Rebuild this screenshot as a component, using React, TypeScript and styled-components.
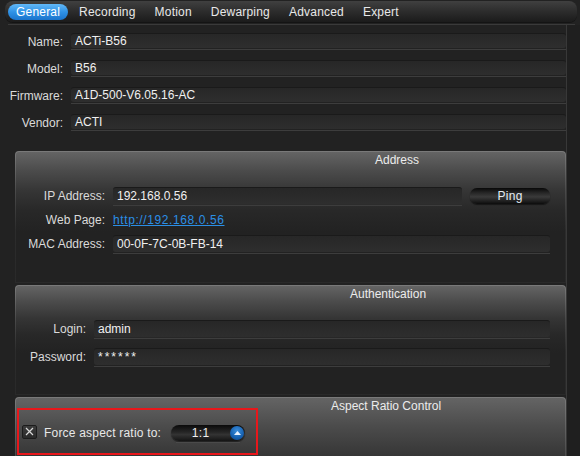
import React from "react";
import styled, { createGlobalStyle } from "styled-components";

const Global = createGlobalStyle`
  html, body { margin: 0; padding: 0; background: #222; }
  body {
    font-family: "Liberation Sans", Arial, sans-serif;
    font-size: 12px;
    color: #e2e2e2;
  }
  * { box-sizing: border-box; }
`;

const Root = styled.div`
  width: 580px;
  height: 456px;
  overflow: hidden;
  background: #222;
  display: flex;
  flex-direction: column;
`;

const TabBar = styled.div`
  height: 21px;
  margin: 1px 3px 0 5px;
  padding: 0 3px;
  border-radius: 8px;
  background: linear-gradient(#404040, #2c2c2c 50%, #1b1b1b);
  box-shadow: 0 1px 0 #141414;
  display: flex;
  align-items: center;
  gap: 3px;
`;

const Tab = styled.div<{ $active?: boolean }>`
  height: 16px;
  line-height: 16px;
  padding: 0 8px;
  border-radius: 8px;
  letter-spacing: 0.2px;
  color: ${(p) => (p.$active ? "#ffffff" : "#e8e8e8")};
  background: ${(p) =>
    p.$active
      ? "linear-gradient(#62b8f7, #2f92e6 50%, #1a74cc)"
      : "transparent"};
`;

const TabRule = styled.div`
  height: 1px;
  margin: 2px 5px 0 8px;
  background: #3a3a3a;
`;

const Body = styled.div`
  flex: 1;
  display: flex;
  min-height: 0;
`;

const Content = styled.div`
  width: 566px;
  display: flex;
  flex-direction: column;
`;

const Track = styled.div`
  flex: 1;
  border-left: 1px solid #383838;
  background: #1f1f1f;
`;

const InfoList = styled.div`
  margin-top: 3px;
  display: flex;
  flex-direction: column;
`;

const InfoRow = styled.div`
  height: 27px;
  display: grid;
  grid-template-columns: 63px 1fr;
  column-gap: 8px;
  align-items: center;
`;

const Label = styled.div`
  text-align: right;
  color: #dadada;
  white-space: nowrap;
`;

const FieldWrap = styled.div`
  flex: 1;
  padding-bottom: 1px;
  border-bottom: 1px solid #3d3d3d;
`;

const FieldBox = styled.div<{ $h?: number; $spacing?: number }>`
  height: ${(p) => p.$h ?? 16}px;
  line-height: ${(p) => (p.$h ?? 16) - 1}px;
  padding-left: 4px;
  letter-spacing: ${(p) => p.$spacing ?? 0}px;
  background: linear-gradient(#272727, #2e2e2e);
  border-top: 1px solid #1a1a1a;
  border-radius: 3px;
  color: #f0f0f0;
  white-space: nowrap;
`;

const Separator = styled.div`
  height: 1px;
  margin: 4px 0 0 15px;
  background: #383838;
`;

const Groups = styled.div`
  margin-top: 11px;
  padding-left: 15px;
  display: flex;
  flex-direction: column;
  gap: 2px;
`;

const GroupFrame = styled.div<{ $h: number }>`
  height: ${(p) => p.$h}px;
  flex-shrink: 0;
  padding: 1px;
  border-radius: 4px 4px 0 0;
  background: linear-gradient(#7a7a7a, #4a4a4a 30%, #2c2c2c 60%, #292929);
`;

const GroupInner = styled.div`
  height: 100%;
  border-radius: 3px 3px 0 0;
  background: linear-gradient(#646464, #4c4c4c 14%, #353535 30%, #282828 45%, #222 62%);
  display: flex;
  flex-direction: column;
`;

const GroupTitle = styled.div<{ $indent: number }>`
  height: 15px;
  padding-top: 1px;
  line-height: 14px;
  padding-left: ${(p) => p.$indent}px;
  color: #ececec;
  white-space: nowrap;
`;

const Form = styled.div<{ $top: number; $label: number; $row: number }>`
  margin-top: ${(p) => p.$top}px;
  padding-right: 15px;
  display: grid;
  grid-template-columns: ${(p) => p.$label}px 1fr;
  grid-auto-rows: ${(p) => p.$row}px;
  column-gap: 8px;
  align-items: center;
`;

const ValueLine = styled.div`
  display: flex;
  align-items: center;
`;

const PingButton = styled.div`
  width: 80px;
  height: 16px;
  margin-left: 8px;
  margin-bottom: 1px;
  border-radius: 7px;
  line-height: 16px;
  text-align: center;
  color: #e4ecf4;
  letter-spacing: 0.3px;
  background: linear-gradient(
    #080808 0%,
    #262626 30%,
    #3a3a3a 55%,
    #1c1c1c 85%,
    #0c0c0c 100%
  );
  box-shadow: 0 1px 1px rgba(0, 0, 0, 0.5);
`;

const Link = styled.a`
  color: #2b8fe6;
  text-decoration: underline;
  letter-spacing: 0.6px;
  justify-self: start;
`;

const Highlight = styled.div`
  margin: -5px 0 0 1px;
  width: 241px;
  height: 47px;
  border: 2px solid #e8171b;
  padding: 2px 0 0 3px;
  display: flex;
  align-items: center;
`;

const Check = styled.div`
  width: 15px;
  height: 14px;
  border-radius: 2px;
  background: linear-gradient(#3c3c3c, #2a2a2a);
  border: 1px solid #1c1c1c;
  display: flex;
  align-items: center;
  justify-content: center;
  margin-bottom: 2px;
`;

const CheckText = styled.div`
  margin-left: 7px;
  color: #e8e8e8;
  letter-spacing: 0.2px;
  white-space: nowrap;
`;

const SpinWrap = styled.div`
  margin-left: 10px;
  padding-top: 3px;
  display: flex;
  flex-direction: column;
  gap: 1px;
`;

const Spin = styled.div`
  width: 74px;
  height: 16px;
  border-radius: 8px;
  background: linear-gradient(#0a0a0a, #262626 45%, #333 60%, #141414);
  box-shadow: 0 1px 1px rgba(0, 0, 0, 0.5);
  display: flex;
  align-items: center;
  padding-right: 1px;
`;

const SpinValue = styled.div`
  flex: 1;
  text-align: center;
  color: #f0f0f0;
  letter-spacing: 0.3px;
`;

const SpinButton = styled.div`
  width: 14px;
  height: 14px;
  border-radius: 50%;
  background: radial-gradient(circle at 50% 35%, #3c8fdc, #1660b0 60%, #0d4485);
  display: flex;
  align-items: center;
  justify-content: center;
`;

const SpinLine = styled.div`
  height: 1px;
  margin: 0 5px;
  background: #4a4a4a;
`;

const tabs = ["General", "Recording", "Motion", "Dewarping", "Advanced", "Expert"];

const info: [string, string][] = [
  ["Name:", "ACTi-B56"],
  ["Model:", "B56"],
  ["Firmware:", "A1D-500-V6.05.16-AC"],
  ["Vendor:", "ACTI"],
];

export default function App() {
  return (
    <Root>
      <Global />
      <TabBar>
        {tabs.map((t, i) => (
          <Tab key={t} $active={i === 0}>
            {t}
          </Tab>
        ))}
      </TabBar>
      <TabRule />
      <Body>
        <Content>
          <InfoList>
            {info.map(([l, v]) => (
              <InfoRow key={l}>
                <Label>{l}</Label>
                <FieldWrap>
                  <FieldBox $h={15}>{v}</FieldBox>
                </FieldWrap>
              </InfoRow>
            ))}
          </InfoList>
          <Separator />
          <Groups>
            <GroupFrame $h={132}>
              <GroupInner>
                <GroupTitle $indent={359}>Address</GroupTitle>
                <Form $top={17} $label={89} $row={24}>
                  <Label>IP Address:</Label>
                  <ValueLine>
                    <FieldWrap>
                      <FieldBox $h={17}>192.168.0.56</FieldBox>
                    </FieldWrap>
                    <PingButton>Ping</PingButton>
                  </ValueLine>
                  <Label>Web Page:</Label>
                  <Link href="#">http://192.168.0.56</Link>
                  <Label>MAC Address:</Label>
                  <FieldWrap>
                    <FieldBox $h={17}>00-0F-7C-0B-FB-14</FieldBox>
                  </FieldWrap>
                </Form>
              </GroupInner>
            </GroupFrame>
            <GroupFrame $h={110}>
              <GroupInner>
                <GroupTitle $indent={334}>Authentication</GroupTitle>
                <Form $top={14} $label={70} $row={28}>
                  <Label>Login:</Label>
                  <FieldWrap>
                    <FieldBox $h={17}>admin</FieldBox>
                  </FieldWrap>
                  <Label>Password:</Label>
                  <FieldWrap>
                    <FieldBox $h={17} $spacing={2}>******</FieldBox>
                  </FieldWrap>
                </Form>
              </GroupInner>
            </GroupFrame>
            <GroupFrame $h={200}>
              <GroupInner>
                <GroupTitle $indent={315}>Aspect Ratio Control</GroupTitle>
                <Highlight>
                  <Check>
                    <svg width="9" height="9" viewBox="0 0 9 9">
                      <path d="M1 1 L8 8 M8 1 L1 8" stroke="#d8d8d8" strokeWidth="1.2" />
                    </svg>
                  </Check>
                  <CheckText>Force aspect ratio to:</CheckText>
                  <SpinWrap>
                    <Spin>
                      <SpinValue>1:1</SpinValue>
                      <SpinButton>
                        <svg width="7" height="4" viewBox="0 0 7 4">
                          <path d="M0 4 L3.5 0 L7 4 Z" fill="#e8f2ff" />
                        </svg>
                      </SpinButton>
                    </Spin>
                    <SpinLine />
                  </SpinWrap>
                </Highlight>
              </GroupInner>
            </GroupFrame>
          </Groups>
        </Content>
        <Track />
      </Body>
    </Root>
  );
}
